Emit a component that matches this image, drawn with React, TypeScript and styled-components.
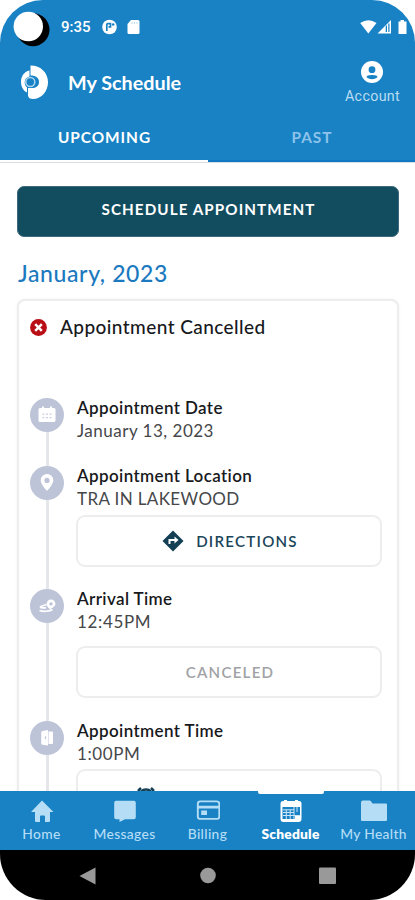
import React from "react";
import styled, { createGlobalStyle } from "styled-components";

const blue = "#1882c5";
const navy = "#124d5f";
const pale = "#b5ddf5";

const GlobalStyle = createGlobalStyle`
  * { box-sizing: border-box; }
  body { margin: 0; background: #fff; }
  button { margin: 0; padding: 0; font: inherit; }
  svg { display: block; flex: none; }
`;

const Phone = styled.div`
  width: 415px;
  height: 900px;
  display: flex;
  flex-direction: column;
  overflow: hidden;
  border-radius: 43px 43px 46px 46px;
  background: #fff;
  color: #17191c;
  font-family: Lato, sans-serif;
`;

const StatusBar = styled.div`
  height: 54px;
  flex: none;
  display: flex;
  align-items: center;
  background: ${blue};
  color: #fff;
`;

const Camera = styled.svg`
  margin: 3px 0 0 12px;
`;

const Clock = styled.span`
  width: 41px;
  margin-left: 11px;
  font: 500 15px/20px Roboto, sans-serif;
`;

const StatusIcons = styled.div<{ $end?: boolean }>`
  display: flex;
  align-items: center;
  gap: ${(p) => (p.$end ? 0 : 10)}px;
  margin-left: ${(p) => (p.$end ? "auto" : 0)};
  padding-right: ${(p) => (p.$end ? 6 : 0)}px;
`;

const Header = styled.header`
  height: 58px;
  flex: none;
  display: flex;
  padding: 0 15px 0 20px;
  background: ${blue};
  color: #fff;
`;

const Brand = styled.div`
  width: 48px;
  padding-top: 11px;
`;

const Title = styled.h1`
  flex: 1;
  margin: 0;
  font-size: 19.8px;
  font-weight: 700;
  line-height: 57px;
`;

const Account = styled.div`
  display: flex;
  flex-direction: column;
  align-items: center;
  gap: 3px;
  padding-top: 7px;
  font: 400 14.3px/20px Roboto, sans-serif;
  letter-spacing: 0.3px;
  color: #b9dcf2;
`;

const Tabs = styled.div`
  height: 51px;
  flex: none;
  display: grid;
  grid-template-columns: 208px 207px;
  background: ${blue};
  border-bottom: 1px solid #d5dee3;
`;

const Tab = styled.button<{ $active?: boolean }>`
  border: 0;
  border-bottom: 2px solid ${(p) => (p.$active ? "#fff" : "#1179c4")};
  background: none;
  color: ${(p) => (p.$active ? "#fff" : "#8dc3eb")};
  font-size: 15.4px;
  font-weight: 700;
  line-height: 46px;
  padding: 1px 0 0 1px;
  letter-spacing: 0.95px;
`;

const Content = styled.main`
  flex: 1;
  min-height: 0;
  overflow: hidden;
  padding: 23px 16px 0 17px;
`;

const Primary = styled.button`
  display: block;
  width: 100%;
  height: 51px;
  border: 1px solid #3c6a7a;
  border-radius: 7px;
  background: ${navy};
  color: #fff;
  font-size: 15.2px;
  font-weight: 700;
  line-height: 45px;
  padding: 0 0 4px 1px;
  letter-spacing: 1.08px;
`;

const Month = styled.h2`
  margin: 20px 0 10px 1px;
  font-size: 23px;
  font-weight: 500;
  line-height: 32px;
  letter-spacing: 0.62px;
  color: #1b79bf;
`;

const Card = styled.section`
  height: 560px;
  border: 2px solid #ededee;
  border-radius: 8px;
  background: #fff;
  box-shadow: 0 0 3px rgba(0, 0, 0, 0.06);
  padding: 12px 15px 0 11px;
`;

const CardHead = styled.div`
  height: 83px;
  display: flex;
  align-items: flex-start;
  gap: 13px;

  svg { margin-top: 6px; }
`;

const CardTitle = styled.h3`
  margin: 0;
  font-size: 19px;
  font-weight: 500;
  line-height: 27px;
  letter-spacing: 0.43px;
`;

const Step = styled.div<{ $height: number }>`
  height: ${(p) => p.$height}px;
  display: grid;
  grid-template-columns: 34px 305px;
  gap: 12px;
`;

const Rail = styled.div`
  display: flex;
  flex-direction: column;
  align-items: center;
  padding-top: 2px;

  &::after {
    content: "";
    flex: 1;
    width: 3px;
    margin-bottom: -2px;
    background: #e4e6e9;
  }
`;

const Dot = styled.div`
  width: 34px;
  height: 34px;
  display: grid;
  place-items: center;
  border-radius: 50%;
  background: #bec4d8;
`;

const StepTitle = styled.div`
  padding-left: 1px;
  font-size: 17px;
  font-weight: 600;
  line-height: 23px;
  letter-spacing: 0.38px;
`;

const StepText = styled.div<{ $spacing?: number }>`
  padding-left: 1px;
  font-size: 17px;
  line-height: 23px;
  letter-spacing: ${(p) => p.$spacing ?? 0.5}px;
  color: #45474a;
`;

const Outline = styled.button<{ $top: number; $muted?: boolean; $wide?: boolean }>`
  width: 306px;
  height: 52px;
  display: flex;
  align-items: center;
  justify-content: center;
  gap: 12px;
  margin-top: ${(p) => p.$top}px;
  padding: ${(p) => (p.$wide ? "2px 0 0" : "0 0 0 2px")};
  border: 2px solid #ededee;
  border-radius: 9px;
  background: #fff;
  color: ${(p) => (p.$muted ? "#a0a2a5" : "#1b4559")};
  font-size: 15.1px;
  font-weight: 600;
  letter-spacing: ${(p) => (p.$wide ? 1.8 : 1.25)}px;
  white-space: nowrap;
`;

const Nav = styled.nav`
  height: 59px;
  flex: none;
  display: grid;
  grid-template-columns: repeat(5, 1fr);
  background: ${blue};
`;

const NavItem = styled.div<{ $active?: boolean }>`
  position: relative;
  display: flex;
  flex-direction: column;
  align-items: center;
  gap: 1px;
  padding-top: 8px;
  font-size: 13.8px;
  font-weight: ${(p) => (p.$active ? 800 : 500)};
  line-height: 20px;
  letter-spacing: ${(p) => (p.$active ? 0.2 : 0.35)}px;
  white-space: nowrap;
  color: ${(p) => (p.$active ? "#fff" : pale)};

  &::before {
    content: "";
    display: ${(p) => (p.$active ? "block" : "none")};
    position: absolute;
    top: -1px;
    width: 66px;
    height: 4px;
    border-radius: 0 0 2px 2px;
    background: #fff;
  }
`;

const SystemBar = styled.div`
  height: 50px;
  flex: none;
  display: flex;
  justify-content: space-between;
  padding: 17px 79px 0;
  background: #000;
`;

const steps = [
  { title: "Appointment Date", text: "January 13, 2023", height: 68, icon: "calendar" },
  { title: "Appointment Location", text: "TRA IN LAKEWOOD", height: 123, icon: "pin", spacing: 0.38 },
  { title: "Arrival Time", text: "12:45PM", height: 132, icon: "route", spacing: 0.65 },
  { title: "Appointment Time", text: "1:00PM", height: 132, icon: "door", spacing: 0.6 },
];

const StepIcon = ({ name }: { name: string }) => (
  <svg width="20" height="20" viewBox="0 0 20 20" fill="#fff">
    {name === "calendar" && (
      <>
        <path d="M3 3h2V1.500h2V3h6V1.500h2V3h2q1.500 0 1.500 1.500v11Q18.500 17 17 17H3q-1.500 0-1.500-1.500v-11Q1.500 3 3 3z" />
        <path d="M5.500 9.200h2M9 9.200h2M12.500 9.200h2M5.500 12.700h2M9 12.700h2M12.500 12.700h2" stroke="#c9cfdf" strokeWidth="1.300" />
      </>
    )}
    {name === "pin" && (
      <path fillRule="evenodd" d="M10 1a6.300 6.300 0 0 0-6.300 6.300C3.700 11.500 10 18 10 18s6.300-6.500 6.300-10.700A6.300 6.300 0 0 0 10 1zm0 3.800a2.600 2.600 0 1 1 0 5.200 2.600 2.600 0 0 1 0-5.200z" />
    )}
    {name === "route" && (
      <>
        <path fillRule="evenodd" d="M14 3.500a4.400 4.400 0 0 0-4.400 4.400c0 2.600 3.400 5.300 3.400 5.300s5.400-2.700 5.400-5.300A4.400 4.400 0 0 0 14 3.500zm0 2.700a1.700 1.700 0 1 1 0 3.400 1.700 1.700 0 0 1 0-3.400z" />
        <path d="M9.500 8.500 4.500 10.200c-2 .8-.8 1.600.5 1.600h4M2.500 14.500c4 1.300 10 1 13-1" fill="none" stroke="#fff" strokeWidth="1.700" />
      </>
    )}
    {name === "door" && (
      <>
        <path d="M5.500 3 11 2v15.500L5.500 16.800q-1.300-.2-1.300-1.500V4.500Q4.200 3.300 5.500 3zM11.500 3.500H15q1 0 1 1v10.500q0 1-1 1h-3.500z" />
        <path d="M8.500 8.300v2.700" stroke="#bec4d8" strokeWidth="1.200" />
      </>
    )}
  </svg>
);

const NavIcon = ({ name }: { name: string }) => {
  const wide = name === "My Health";
  return (
    <svg width={wide ? 28 : 24} height="24" viewBox={wide ? "-2 0 28 24" : "0 0 24 24"} fill="currentColor">
      {name === "Home" && <path d="M12 1.500 23.500 13H20v9q0 1-1 1h-4v-5.500q0-1-1-1h-3q-1 0-1 1V23H6q-1 0-1-1v-9H1z" />}
      {name === "Messages" && <path d="M3.200 1.700h17.600q2 0 2 2v14.500q0 2-2 2H12L6.500 23v-2.800H3.200q-2 0-2-2V3.700q0-2 2-2z" />}
      {name === "Billing" && (
        <>
          <rect x="1.800" y="2.400" width="21.500" height="17.500" rx="2.500" fill="none" stroke="currentColor" strokeWidth="1.900" />
          <path d="M2 6.800h21v2.600H2zM5.200 11.500H11V16H5.200z" />
        </>
      )}
      {name === "Schedule" && (
        <>
          <path d="M4 2h1V1h3v1h8V1h3v1h1q2.500 0 2.500 2.500V20q0 3-3 3h-15q-3 0-3-3V5q0-3 2.500-3z" />
          <path d="M3.500 8h17.500v12H3.500z" fill={blue} />
          <path d="M4 10.800h11M4 13.500h11M4 16.500h17M7.300 10.500v9.500M11.200 10.500v9.500M15 8v12M18 8v5" stroke="#cce6f7" strokeWidth="1" />
          <path d="M16 17h6v4h-6z" />
        </>
      )}
      {wide && <path d="M1 1.500h6.500q1 0 1.600 1L10.500 4.500H24q1 0 1 1V21q0 1-1 1H0q-1 0-1-1V3.500q0-2 2-2z" />}
    </svg>
  );
};

export default function App() {
  return (
    <>
      <GlobalStyle />
      <Phone>
        <StatusBar>
          <Camera width="38" height="38" viewBox="0 0 38 38">
            <circle cx="21" cy="19.700" r="16.500" fill="#000" />
            <circle cx="16.300" cy="16.500" r="14.700" fill="#fff" />
          </Camera>
          <Clock>9:35</Clock>
          <StatusIcons>
            <svg width="15" height="16" viewBox="0 0 15 16">
              <circle cx="7.500" cy="8" r="7.300" fill="#fff" />
              <path d="M4.800 12V5.700q0-1 1-1h2.700v3.200H6.500" fill="none" stroke={blue} strokeWidth="1.700" />
              <circle cx="11.200" cy="5.500" r="1.300" fill={blue} />
            </svg>
            <svg width="13" height="16" viewBox="0 0 13 16">
              <path d="M4 1h7q1.500 0 1.500 1.500v11Q12.500 15 11 15H2q-1.500 0-1.500-1.500V5z" fill="#fff" />
              <path d="M5 3v2M7.500 3v2M10 3v2" stroke="#b5ddf5" />
            </svg>
          </StatusIcons>
          <StatusIcons $end>
            <svg width="50" height="16" viewBox="0 0 50 16" fill="#fff">
              <path d="M1.200 4Q9.500-1.500 17.500 4L9.300 14.500z" />
              <path fillRule="evenodd" d="M18.500 14.500 32 1v13.500zM28 6l-1.300 1.500v5.500H28zM29.300 4.500v8.500h1.200V4.500z" />
              <path d="M39.500 2.500h2V1H45v1.500h2.500V15h-8V2.500z" />
            </svg>
          </StatusIcons>
        </StatusBar>
        <Header>
          <Brand>
            <svg width="29" height="35" viewBox="0 0 29 35">
              <path d="M10.500.5C21 .5 28 8 28 17.200 28 26.500 21 34 13 34q-4.500 0-5-3.500V23h4.500c4 0 6.500-2.500 6.500-6 0-4-3-6.500-8.500-6.500z" fill="#fff" />
              <path d="M9.500 5.500C4 6.500 1 11.500 1 17c0 5 2.500 9 6 10.500v-5C5 21 4.700 19 4.700 17c0-3 2-5 4.800-5.500z" fill="#fff" />
              <circle cx="10.300" cy="17" r="4.500" fill={blue} stroke="#a9d3ef" strokeWidth="1.600" />
            </svg>
          </Brand>
          <Title>My Schedule</Title>
          <Account>
            <svg width="22" height="22" viewBox="0 0 22 22">
              <circle cx="11" cy="11" r="11" fill="#fff" />
              <circle cx="11" cy="8.700" r="3.400" fill={blue} />
              <path d="M5.500 16.300q0-2.300 5.500-2.300t5.500 2.300q-2.500 2-5.500 2t-5.500-2z" fill={blue} />
            </svg>
            <span>Account</span>
          </Account>
        </Header>
        <Tabs>
          <Tab $active>UPCOMING</Tab>
          <Tab>PAST</Tab>
        </Tabs>
        <Content>
          <Primary>SCHEDULE APPOINTMENT</Primary>
          <Month>January, 2023</Month>
          <Card>
            <CardHead>
              <svg width="17" height="17" viewBox="0 0 17 17">
                <circle cx="8.500" cy="8.500" r="8.400" fill="#b90e16" />
                <path d="m5.200 5.200 6.600 6.600m0-6.600-6.600 6.600" stroke="#fff" strokeWidth="2.500" />
              </svg>
              <CardTitle>Appointment Cancelled</CardTitle>
            </CardHead>
            {steps.map((s, i) => (
              <Step key={s.title} $height={s.height}>
                <Rail>
                  <Dot><StepIcon name={s.icon} /></Dot>
                </Rail>
                <div>
                  <StepTitle>{s.title}</StepTitle>
                  <StepText $spacing={s.spacing}>{s.text}</StepText>
                  {i === 1 && (
                    <Outline $top={5}>
                      <svg width="22" height="22" viewBox="0 0 22 22">
                        <path d="M11 .5 21.500 11 11 21.500.5 11z" fill="#123f53" />
                        <path d="M7.500 14v-4h6" fill="none" stroke="#fff" strokeWidth="2" />
                        <path d="m12.500 6.500 4 3.500-4 3.500z" fill="#fff" />
                      </svg>
                      DIRECTIONS
                    </Outline>
                  )}
                  {i === 2 && <Outline $top={13} $muted>CANCELED</Outline>}
                  {i === 3 && (
                    <Outline $top={4} $wide>
                      <svg width="20" height="18" viewBox="0 0 20 18" fill="none" stroke="#123f53" strokeWidth="2.500">
                        <circle cx="10" cy="9.500" r="7" />
                        <path d="m2 4 3-3M15 1l3 3M10 6v4l3 2" />
                      </svg>
                      CHANGE ARRIVAL
                    </Outline>
                  )}
                </div>
              </Step>
            ))}
          </Card>
        </Content>
        <Nav>
          {["Home", "Messages", "Billing", "Schedule", "My Health"].map((n) => (
            <NavItem key={n} $active={n === "Schedule"}>
              <NavIcon name={n} />
              {n}
            </NavItem>
          ))}
        </Nav>
        <SystemBar>
          <svg width="17" height="18" viewBox="0 0 17 18"><path d="M16.500.5v17L.5 9z" fill="#999" /></svg>
          <svg width="16" height="18" viewBox="0 0 16 18"><circle cx="8" cy="8.500" r="7.800" fill="#999" /></svg>
          <svg width="17" height="18" viewBox="0 0 17 18"><rect y=".5" width="17" height="16.500" rx="1" fill="#999" /></svg>
        </SystemBar>
      </Phone>
    </>
  );
}
